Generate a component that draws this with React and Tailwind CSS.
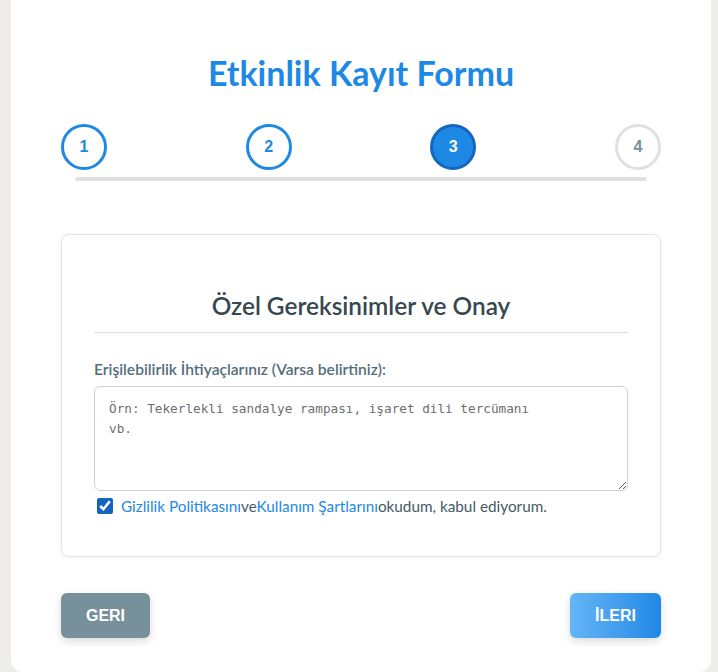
export default function App() {
  const steps = [
    { n: 1, cls: "border-[#1e88e5] text-[#1e88e5] bg-white" },
    { n: 2, cls: "border-[#1e88e5] text-[#1e88e5] bg-white" },
    { n: 3, cls: "border-[#1565c0] text-white bg-[#1e88e5]" },
    { n: 4, cls: "border-[#e0e0e0] text-[#78909c] bg-white" },
  ];
  return (
    <div className="min-h-[672px] bg-[#efedea] px-[11px] pr-[7px]" style={{ fontFamily: "Lato, 'Noto Sans', sans-serif" }}>
      <div className="bg-white rounded-b-xl px-[50px] pt-[53px] pb-[34px] min-h-[672px] flex flex-col">
        <h1 className="text-center text-[34px] leading-[40px] font-bold text-[#1e88e5]">Etkinlik Kayıt Formu</h1>
        <div className="mt-[31px]">
          <div className="flex justify-between">
            {steps.map((s) => (
              <div
                key={s.n}
                className={`w-[46px] h-[46px] rounded-full border-[3px] flex items-center justify-center text-[16px] font-bold ${s.cls}`}
                style={{ fontFamily: "'Liberation Sans', Arial, sans-serif" }}
              >
                {s.n}
              </div>
            ))}
          </div>
          <div className="mx-[14px] mt-[7px] h-1 rounded bg-[#e0e0e0]"></div>
        </div>
        <div className="mt-[53px] border border-[#e3e3e3] rounded-lg shadow-[0_1px_4px_rgba(0,0,0,0.06)] px-[32px] pt-[56px] pb-[40px]">
          <h2 className="text-center text-[24.4px] leading-[29px] font-semibold text-[#37474f] pb-[12px] border-b border-[#e0e0e0]">
            Özel Gereksinimler ve Onay
          </h2>
          <label className="block mt-[26px] text-[15.6px] leading-[20px] font-semibold text-[#546e7a]">
            Erişilebilirlik İhtiyaçlarınız (Varsa belirtiniz):
          </label>
          <textarea
            className="block mt-[7px] w-full h-[105px] border border-[#d0d0d8] rounded-md px-[14px] py-[12px] text-[12.7px] leading-[20px] placeholder:text-[#6e6e6e] outline-none"
            style={{ fontFamily: "'DejaVu Sans Mono', monospace" }}
            placeholder={"Örn: Tekerlekli sandalye rampası, işaret dili tercümanı\nvb."}
          ></textarea>
          <div className="mt-[5px] flex items-center gap-[8px] text-[15.3px] leading-[20px] text-[#455a64]">
            <input type="checkbox" defaultChecked className="w-[16px] h-[16px] m-0 ml-[3px] accent-[#1565c0]" />
            <span>
              <span className="text-[#1e88e5]">Gizlilik Politikasını</span>ve<span className="text-[#1e88e5]">Kullanım Şartlarını</span>okudum, kabul ediyorum.
            </span>
          </div>
        </div>
        <div className="mt-[36px] flex justify-between">
          <button
            className="w-[89px] h-[45px] rounded-md bg-[#78909c] text-white font-bold text-[16px] shadow-[0_3px_8px_rgba(0,0,0,0.15)]"
            style={{ fontFamily: "'Liberation Sans', Arial, sans-serif" }}
          >
            GERI
          </button>
          <button
            className="w-[91px] h-[45px] rounded-md bg-gradient-to-r from-[#64b5f6] to-[#1e88e5] text-white font-bold text-[16px] shadow-[0_3px_8px_rgba(0,0,0,0.15)]"
            style={{ fontFamily: "'Liberation Sans', Arial, sans-serif" }}
          >
            İLERI
          </button>
        </div>
      </div>
    </div>
  );
}
